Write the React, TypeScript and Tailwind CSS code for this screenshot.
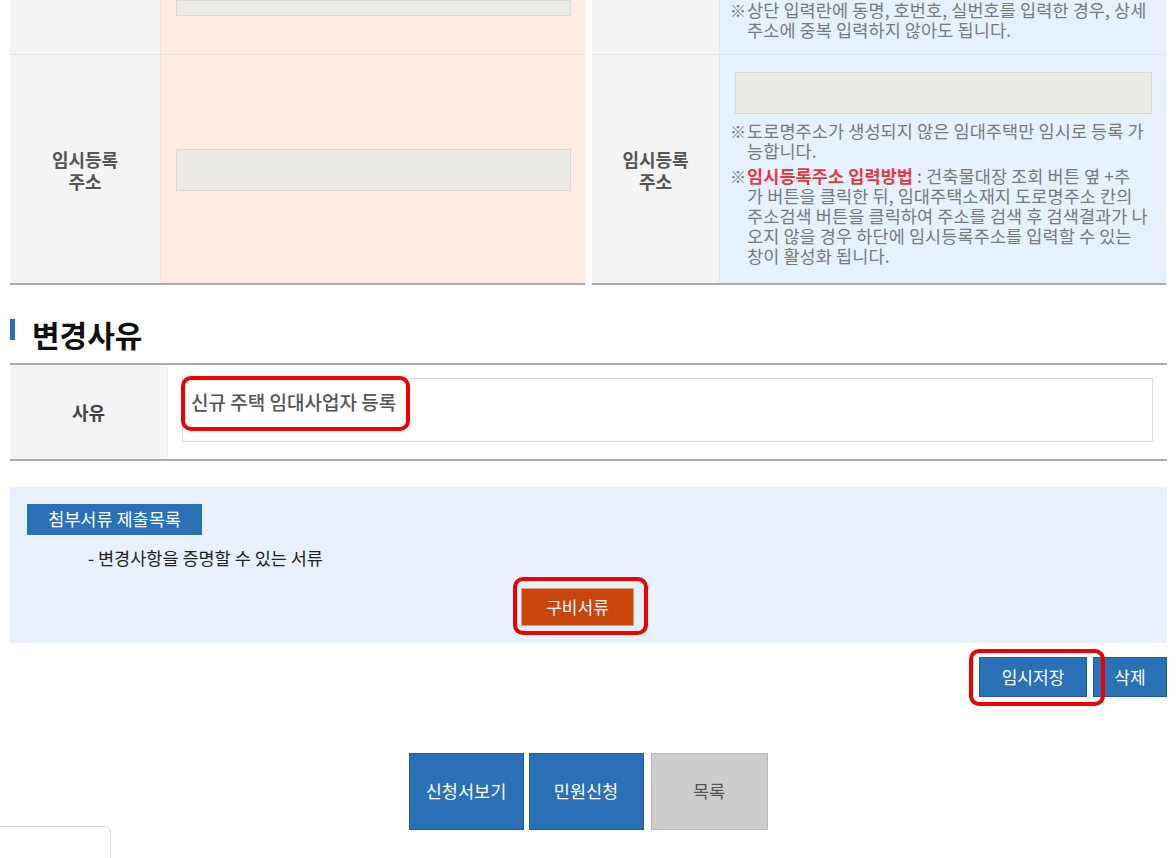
import React from "react";

const font = { fontFamily: '"Noto Sans CJK KR", "Noto Sans", sans-serif' };

function Note({ children }: { children: React.ReactNode }) {
  return (
    <div className="flex text-[17.5px] leading-[20px] text-[#7a7a7a] tracking-[0.1px]">
      <span className="w-[17px] shrink-0 text-[16px]">※</span>
      <div className="whitespace-nowrap">{children}</div>
    </div>
  );
}

function GrayInput({ className = "" }: { className?: string }) {
  return <div className={"h-[42px] bg-[#ebe9e5] border border-[#dad8d4] " + className} />;
}

export default function App() {
  return (
    <div className="relative w-[1176px] h-[858px] overflow-hidden bg-white" style={font}>
      {/* 상단 주소 표 두 개 */}
      <div className="grid grid-cols-[575px_574px] gap-[7px] pl-[10px]">
        {/* 왼쪽 표 */}
        <div className="border-b-2 border-[#a9a9a9]">
          <div className="flex h-[55px] border-b border-[#e4e4e4]">
            <div className="w-[151px] shrink-0 bg-[#f4f4f4] border-r border-[#ebe4e0]" />
            <div className="flex-1 bg-[#fcebe3] flex flex-col justify-end pb-[38px] pl-[15px] pr-[14px]">
              <GrayInput />
            </div>
          </div>
          <div className="flex h-[228px]">
            <div className="w-[151px] shrink-0 bg-[#f4f4f4] border-r border-[#ebe4e0] flex items-center justify-center pt-[2px]">
              <div className="text-center text-[18px] leading-[22px] font-bold text-[#555]">
                임시등록
                <br />
                주소
              </div>
            </div>
            <div className="flex-1 bg-[#fcebe3] flex items-center pl-[15px] pr-[14px] pt-[1px]">
              <GrayInput className="w-full" />
            </div>
          </div>
        </div>

        {/* 오른쪽 표 */}
        <div className="border-b-2 border-[#a9a9a9]">
          <div className="flex h-[55px] border-b border-[#e4e4e4]">
            <div className="w-[128px] shrink-0 bg-[#f4f4f4] border-r border-[#e4e8ec]" />
            <div className="flex-1 bg-[#e5f1fd] flex flex-col justify-end pb-[14px] pl-[10px]">
              <Note>
                상단 입력란에 동명, 호번호, 실번호를 입력한 경우, 상세
                <br />
                주소에 중복 입력하지 않아도 됩니다.
              </Note>
            </div>
          </div>
          <div className="flex h-[228px]">
            <div className="w-[128px] shrink-0 bg-[#f4f4f4] border-r border-[#e4e8ec] flex items-center justify-center pt-[2px]">
              <div className="text-center text-[18px] leading-[22px] font-bold text-[#555]">
                임시등록
                <br />
                주소
              </div>
            </div>
            <div className="flex-1 bg-[#e5f1fd] pt-[17px]">
              <div className="pl-[15px] pr-[14px]">
                <GrayInput />
              </div>
              <div className="pl-[10px] mt-[7px] flex flex-col gap-[5px]">
                <Note>
                  도로명주소가 생성되지 않은 임대주택만 임시로 등록 가
                  <br />
                  능합니다.
                </Note>
                <Note>
                  <span className="text-[#e8383c] font-bold">임시등록주소 입력방법</span> : 건축물대장 조회 버튼 옆 +추
                  <br />
                  가 버튼을 클릭한 뒤, 임대주택소재지 도로명주소 칸의
                  <br />
                  주소검색 버튼을 클릭하여 주소를 검색 후 검색결과가 나
                  <br />
                  오지 않을 경우 하단에 임시등록주소를 입력할 수 있는
                  <br />
                  창이 활성화 됩니다.
                </Note>
              </div>
            </div>
          </div>
        </div>
      </div>

      {/* 변경사유 */}
      <div className="pl-[10px] pr-[9px]">
        <div className="flex items-start gap-[17px] pt-[33px] h-[78px]">
          <div className="w-[5px] h-[21px] mt-[1px] bg-[#2a6fba]" />
          <div className="text-[30px] leading-[30px] font-bold text-[#111] mt-[1px]">변경사유</div>
        </div>

        <div className="border-t-2 border-b-2 border-[#a9a9a9] flex h-[98px]">
          <div className="w-[158px] shrink-0 bg-[#f4f4f4] border-r border-[#ececec] flex items-center justify-center">
            <span className="text-[18px] font-bold text-[#444]">사유</span>
          </div>
          <div className="flex-1 pl-[14px] pr-[14px] pt-[13px]">
            <div className="h-[64px] border border-[#dcdcdc] px-[8px] pt-[11px] text-[19px] leading-[24px] text-[#555] font-medium">
              신규 주택 임대사업자 등록
            </div>
          </div>
        </div>

        {/* 첨부서류 */}
        <div className="mt-[26px] h-[156px] bg-[#e8f0fb] pl-[17px] pt-[17px]">
          <div className="w-[175px] h-[31px] bg-[#2a71b8] text-white text-[17.5px] flex items-center justify-center">
            첨부서류 제출목록
          </div>
          <div className="ml-[61px] mt-[13px] text-[17.5px] leading-[20px] text-[#222]">
            - 변경사항을 증명할 수 있는 서류
          </div>
          <div className="mt-[20px] ml-[494px]">
            <button className="w-[113px] h-[38px] bg-[#c9460e] border border-[#e39a78] text-white text-[17px]">
              구비서류
            </button>
          </div>
        </div>

        <div className="mt-[14px] flex justify-end gap-[6px]">
          <button className="w-[108px] h-[40px] bg-[#2a71b8] border border-[#1f5c9c] text-white text-[17px]">
            임시저장
          </button>
          <button className="w-[74px] h-[40px] bg-[#2a71b8] border border-[#1f5c9c] text-white text-[17px]">
            삭제
          </button>
        </div>

        <div className="mt-[56px] flex justify-center gap-[5px] pr-[1px]">
          <button className="w-[115px] h-[77px] bg-[#2a71b8] border border-[#1f5c9c] text-white text-[17.5px]">
            신청서보기
          </button>
          <button className="w-[115px] h-[77px] bg-[#2a71b8] border border-[#1f5c9c] text-white text-[17.5px]">
            민원신청
          </button>
          <button className="w-[117px] h-[77px] ml-[2px] bg-[#cccccc] border border-[#b9b9b9] text-[#555] text-[17.5px]">
            목록
          </button>
        </div>
      </div>

      {/* 빨간 표시 */}
      <div className="absolute left-[181px] top-[376px] w-[229px] h-[55px] border-[4px] border-[#ee0000] rounded-[10px]" />
      <div className="absolute left-[513px] top-[577px] w-[135px] h-[58px] border-[4px] border-[#ee0000] rounded-[10px]" />
      <div className="absolute left-[969px] top-[649px] w-[136px] h-[57px] border-[4px] border-[#ee0000] rounded-[10px]" />

      {/* 왼쪽 아래 떠 있는 상자 */}
      <div className="absolute left-[-10px] top-[826px] w-[121px] h-[60px] border border-[#dddddd] rounded-[6px] bg-white" />
    </div>
  );
}
